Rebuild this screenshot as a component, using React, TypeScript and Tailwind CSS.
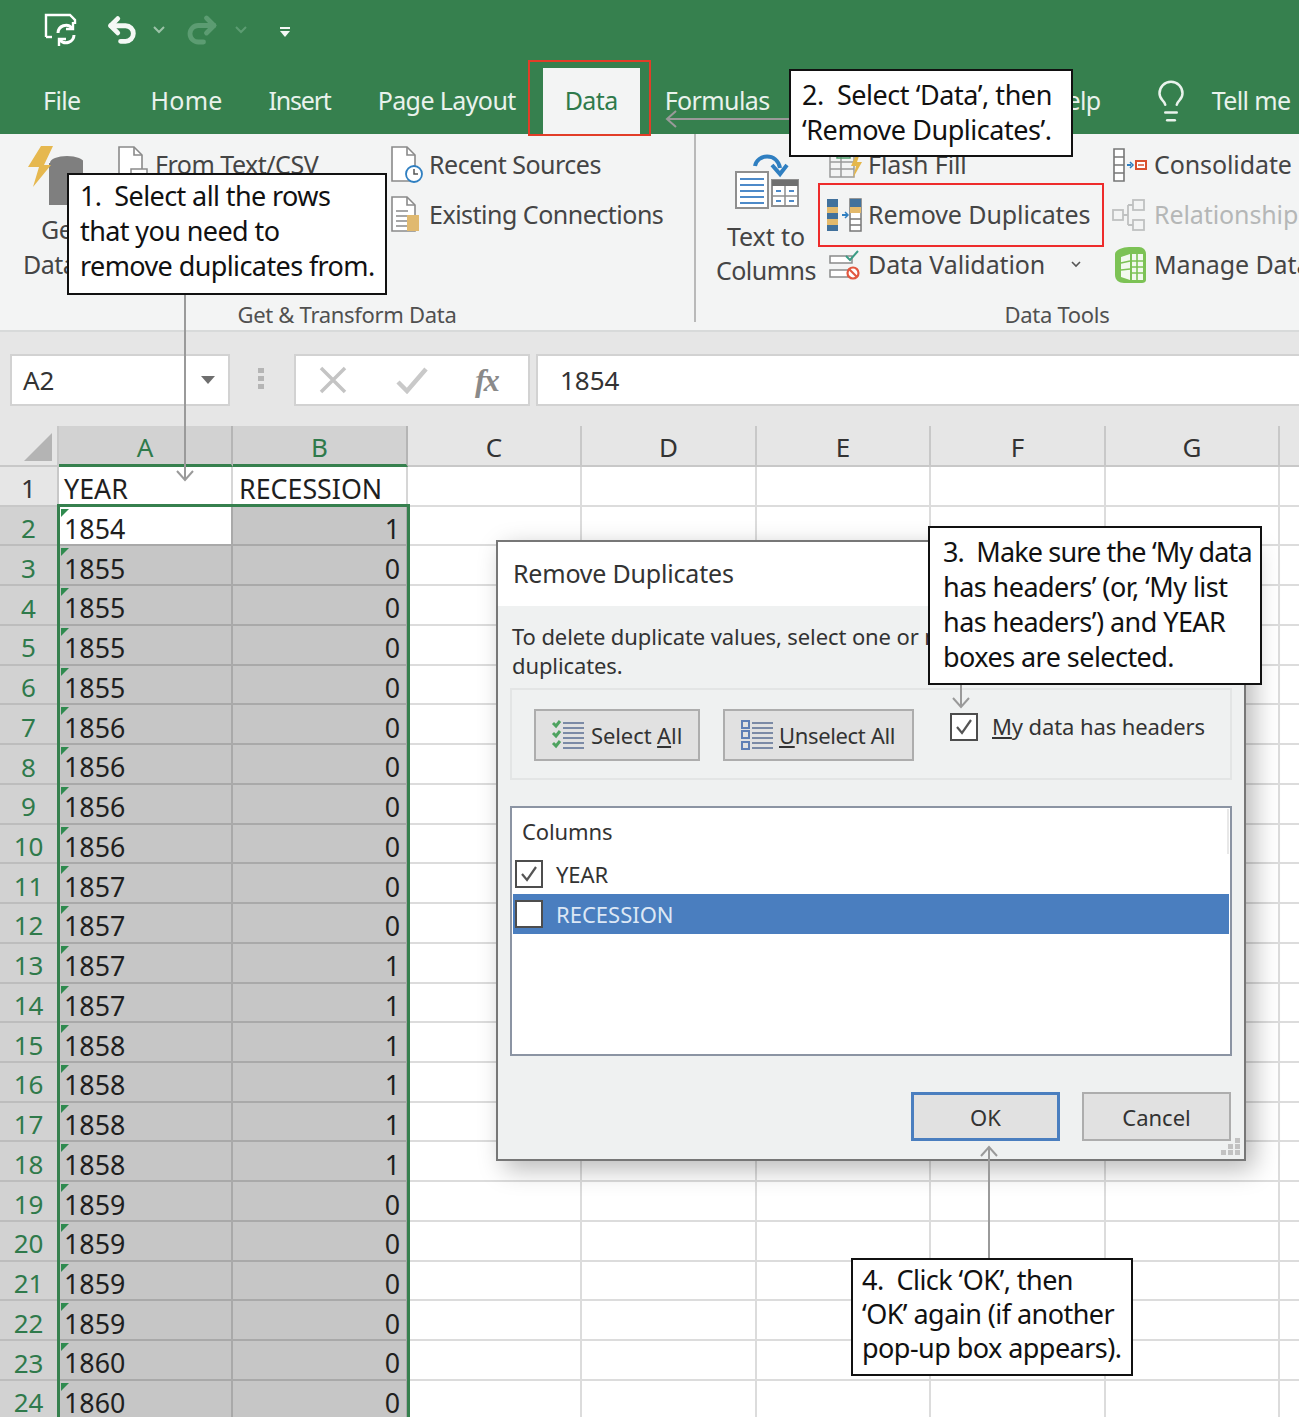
import { Lightbulb, Redo2, Undo2 } from 'lucide-react';
import type { ReactNode } from 'react';

const years = [
  1854, 1855, 1855, 1855, 1855, 1856, 1856, 1856, 1856, 1857, 1857, 1857, 1857, 1858, 1858, 1858,
  1858, 1859, 1859, 1859, 1859, 1860, 1860,
];
const recession = [1, 0, 0, 0, 0, 0, 0, 0, 0, 0, 0, 1, 1, 1, 1, 1, 1, 0, 0, 0, 0, 0, 0];
const columns = ['A', 'B', 'C', 'D', 'E', 'F', 'G'];

const tabText = 'text-[25px] tracking-[-0.6px] text-[#e9f2ec] whitespace-nowrap';
const ribbonText = 'text-[25px] tracking-[-0.5px] text-[#454545] whitespace-nowrap';
const ribbonTextRight = 'text-[25px] tracking-[-0.1px] text-[#454545] whitespace-nowrap';
const groupLabel = 'text-[22px] tracking-[-0.3px] leading-[30px] text-[#505050] whitespace-nowrap';
const sheetText = 'text-[26.8px] text-[#1f1f1f] whitespace-nowrap';
const dialogText = 'text-[22px] tracking-[-0.1px] text-[#333] whitespace-nowrap';

function RibbonRow({ icon, iconWidth, label, muted, right }: { icon: ReactNode; iconWidth: string; label: string; muted?: boolean; right?: boolean }) {
  return (
    <div className="flex h-[50px] items-center">
      <div className={`${iconWidth} flex shrink-0 items-center`}>{icon}</div>
      <span className={muted ? 'text-[25px] tracking-[-0.1px] text-[#b5b7b7] whitespace-nowrap' : right ? ribbonTextRight : ribbonText}>{label}</span>
    </div>
  );
}

function DocIcon({ children }: { children?: ReactNode }) {
  return (
    <svg width="34" height="40" viewBox="0 0 34 40" fill="none">
      <path d="M2 2h15l8 8v26H2z" fill="#fff" stroke="#8a8a8a" strokeWidth="1.6" />
      <path d="M17 2v8h8" stroke="#8a8a8a" strokeWidth="1.6" />
      {children}
    </svg>
  );
}

function SaveSyncIcon() {
  return (
    <svg width="36" height="34" viewBox="0 0 36 34" fill="none">
      <path d="M2 24V2h24l5 5v4" stroke="#fff" strokeWidth="2.4" />
      <path d="M2 24h6" stroke="#fff" strokeWidth="2.4" />
      <path d="M14 20a8 8 0 0 1 14-5M30 22a8 8 0 0 1-14 5" stroke="#fff" strokeWidth="3" />
      <path d="M29 9v7h-7M15 33v-7h7" stroke="#fff" strokeWidth="2.4" />
    </svg>
  );
}

function TextColumnsIcon() {
  return (
    <svg width="64" height="58" viewBox="0 0 64 58" fill="none">
      <path d="M20 14c2-12 22-14 25 2" stroke="#2f7fc1" strokeWidth="4" />
      <path d="M37 13l8 9 7-9" stroke="#2f7fc1" strokeWidth="4" />
      <rect x="1" y="20" width="32" height="36" fill="#fff" stroke="#8f8f8f" strokeWidth="2" />
      <path d="M5 27h24M5 33h24M5 39h24M5 45h24M5 51h24" stroke="#4d8ac9" strokeWidth="2" />
      <rect x="37" y="28" width="26" height="26" fill="#fff" stroke="#8f8f8f" strokeWidth="2" />
      <rect x="37" y="28" width="26" height="6" fill="#6f6f6f" />
      <path d="M50 34v20M37 44h26" stroke="#8f8f8f" strokeWidth="1.5" />
      <path d="M41 39h5M54 39h5M41 49h5M54 49h5" stroke="#4d8ac9" strokeWidth="2" />
    </svg>
  );
}

function RemoveDuplicatesIcon() {
  return (
    <svg width="36" height="34" viewBox="0 0 36 34" fill="none">
      <rect x="1" y="1" width="11" height="32" fill="#41719c" />
      <rect x="1" y="9" width="11" height="6" fill="#e3b96b" />
      <rect x="1" y="21" width="11" height="6" fill="#e3b96b" />
      <path d="M16 17h5" stroke="#2f7fc1" strokeWidth="2" />
      <path d="M19 14l3 3-3 3" stroke="#2f7fc1" strokeWidth="1.5" />
      <rect x="24" y="1" width="11" height="32" fill="#fff" stroke="#777" strokeWidth="1.5" />
      <rect x="24" y="1" width="11" height="8" fill="#41719c" />
      <rect x="24" y="9" width="11" height="6" fill="#e3b96b" />
      <path d="M24 21h11M24 27h11" stroke="#777" strokeWidth="1.5" />
    </svg>
  );
}

function FlashFillIcon() {
  return (
    <svg width="34" height="28" viewBox="0 0 34 28" fill="none">
      <path d="M1 4h24v22H1zM1 11h24M1 18h24M12 4v22" stroke="#9a9a9a" strokeWidth="1.5" />
      <path d="M8 1h13v6H8z" stroke="#4f9d6b" strokeWidth="1.5" />
      <path d="M28 2l-6 13h5l-3 12 9-16h-5l3-9z" fill="#e5b74b" />
    </svg>
  );
}

function DataValidationIcon() {
  return (
    <svg width="32" height="30" viewBox="0 0 32 30" fill="none">
      <path d="M1 6h22v7H1zM1 20h18v7H1z" fill="#fff" stroke="#8a8a8a" strokeWidth="1.5" />
      <path d="M17 6l4 4 8-9" stroke="#3b9c85" strokeWidth="2" />
      <circle cx="24" cy="23" r="5.5" fill="#fff" stroke="#e2573f" strokeWidth="2.2" />
      <path d="M20 19l8 8" stroke="#e2573f" strokeWidth="2.2" />
    </svg>
  );
}

function ConsolidateIcon() {
  return (
    <svg width="36" height="34" viewBox="0 0 36 34" fill="none">
      <path d="M2 1h10v32H2zM2 9h10M2 17h10M2 25h10" stroke="#777" strokeWidth="1.6" fill="#fff" />
      <path d="M15 17h4" stroke="#2f7fc1" strokeWidth="2" />
      <path d="M18 14l3 3-3 3" stroke="#2f7fc1" strokeWidth="1.5" />
      <rect x="24" y="13" width="10" height="8" fill="#fff" stroke="#d9502e" strokeWidth="2" />
      <path d="M26 17h6" stroke="#d9502e" strokeWidth="1.5" />
    </svg>
  );
}

function RelationshipsIcon() {
  return (
    <svg width="34" height="32" viewBox="0 0 34 32" fill="none" stroke="#bfc1c1" strokeWidth="1.8">
      <rect x="1" y="11" width="10" height="10" />
      <rect x="21" y="1" width="11" height="10" />
      <rect x="21" y="21" width="11" height="10" />
      <path d="M11 16h5M16 6v20M16 6h5M16 26h5" />
    </svg>
  );
}

function ManageModelIcon() {
  return (
    <svg width="36" height="38" viewBox="0 0 36 38" fill="none">
      <path d="M3 8c0-4 8-7 14-7h10c4 0 7 3 7 7v26c0 2-2 3-4 3H12c-5 0-9-3-9-8z" fill="#7cc255" />
      <path d="M9 11l9-3v26l-9-3zM20 8h11v26H20z" fill="#fff" opacity="0.9" />
      <path d="M20 15h11M20 21h11M20 27h11M25 8v26M9 17l9-2M9 24l9-1" stroke="#7cc255" strokeWidth="1.6" />
    </svg>
  );
}

function CheckBox({ checked, size }: { checked: boolean; size: string }) {
  return (
    <div className={`${size} flex shrink-0 items-center justify-center border-2 border-[#4d4d4d] bg-white`}>
      {checked && (
        <svg width="20" height="18" viewBox="0 0 20 18" fill="none">
          <path d="M3 9l5 6L17 2" stroke="#555" strokeWidth="2.2" />
        </svg>
      )}
    </div>
  );
}

function Callout({ className, children }: { className: string; children: ReactNode }) {
  return (
    <div className={`absolute z-30 border-2 border-[#111] bg-white text-[27px] text-[#111] whitespace-pre ${className}`}>
      {children}
    </div>
  );
}

export default function App() {
  return (
    <div className="relative h-[1417px] w-[1299px] overflow-hidden bg-white font-['Noto_Sans',sans-serif]">
      {/* title bar and tabs */}
      <div className="h-[134px] bg-[#36804e]">
        <div className="flex h-[68px] items-center pb-[8px] pl-[44px]">
          <SaveSyncIcon />
          <Undo2 className="ml-[25px] text-[#f4f8f5]" size={34} strokeWidth={3.4} />
          <svg className="ml-[14px]" width="12" height="8" viewBox="0 0 12 8" fill="none">
            <path d="M1 1l5 5 5-5" stroke="#9cc3a8" strokeWidth="2" />
          </svg>
          <Redo2 className="ml-[19px] text-[#5c9c72]" size={36} strokeWidth={3.2} />
          <svg className="ml-[15px]" width="12" height="8" viewBox="0 0 12 8" fill="none">
            <path d="M1 1l5 5 5-5" stroke="#5c9c72" strokeWidth="2" />
          </svg>
          <svg className="ml-[32px] mt-[4px]" width="12" height="12" viewBox="0 0 12 12" fill="#f4f8f5">
            <rect x="1" y="1" width="10" height="2" />
            <path d="M1 5h10l-5 6z" />
          </svg>
        </div>
        <div className="flex h-[66px] items-center pl-[43px]">
          <span className={tabText}>File</span>
          <span className="ml-[70px] whitespace-nowrap text-[25px] tracking-[0.2px] text-[#e9f2ec]">Home</span>
          <span className="ml-[46px] whitespace-nowrap text-[25px] tracking-[-1.2px] text-[#e9f2ec]">Insert</span>
          <span className={`${tabText} ml-[47px]`}>Page Layout</span>
          <div className="ml-[27px] flex h-full w-[97px] items-center justify-center bg-[#f3f4f4]">
            <span className="text-[25px] tracking-[-0.6px] text-[#2f7a4b]">Data</span>
          </div>
          <span className={`${tabText} ml-[25px]`}>Formulas</span>
          <span className={`${tabText} ml-[279px]`}>Help</span>
          <Lightbulb className="ml-[47px] text-[#e9f2ec]" size={46} strokeWidth={1.3} />
          <span className={`${tabText} ml-[18px]`}>Tell me</span>
        </div>
      </div>

      {/* ribbon */}
      <div className="flex h-[198px] border-b-2 border-[#d8dada] bg-[#f3f4f4]">
        <div className="flex h-[188px] w-[696px] shrink-0 flex-col border-r-2 border-[#b9b9b9] pt-[6px]">
          <div className="flex h-[150px] shrink-0">
            <div className="ml-[23px] flex w-[94px] shrink-0 flex-col">
              <svg className="ml-[4px] mt-[5px]" width="56" height="62" viewBox="0 0 56 62" fill="none">
                <ellipse cx="40" cy="18" rx="17" ry="7" fill="#7f7f7f" />
                <rect x="22" y="18" width="34" height="42" fill="#7f7f7f" />
                <path d="M14 1h12L17 20h7L6 42l6-20H1z" fill="#e6b84f" />
              </svg>
              <div className={`${ribbonText} ml-[18px] mt-[5px] leading-[35px]`}>Get</div>
              <div className={`${ribbonText} leading-[35px]`}>Data</div>
            </div>
            <div className="flex w-[273px] shrink-0 flex-col">
              <RibbonRow
                iconWidth="w-[38px]"
                label="From Text/CSV"
                icon={
                  <DocIcon>
                    <rect x="14" y="24" width="16" height="14" fill="#fff" stroke="#8a8a8a" strokeWidth="1.5" />
                  </DocIcon>
                }
              />
            </div>
            <div className="flex flex-col">
              <RibbonRow
                iconWidth="w-[39px]"
                label="Recent Sources"
                icon={
                  <DocIcon>
                    <circle cx="24" cy="29" r="8" fill="#fff" stroke="#2f7fc1" strokeWidth="1.8" />
                    <path d="M24 24v5h4" stroke="#555" strokeWidth="1.5" />
                  </DocIcon>
                }
              />
              <RibbonRow
                iconWidth="w-[39px]"
                label="Existing Connections"
                icon={
                  <DocIcon>
                    <path d="M6 16h12M6 21h12M6 26h12M6 31h12" stroke="#8a8a8a" strokeWidth="1.5" />
                    <rect x="17" y="20" width="12" height="16" fill="#e0b96f" />
                  </DocIcon>
                }
              />
            </div>
          </div>
          <div className={`${groupLabel} shrink-0 pt-[9px] text-center`}>Get &amp; Transform Data</div>
        </div>
        <div className="flex h-[188px] w-[722px] shrink-0 flex-col pt-[6px]">
          <div className="flex h-[150px] shrink-0">
            <div className="ml-[19px] flex w-[102px] shrink-0 flex-col items-center">
              <div className="mt-[12px] ml-[1px]"><TextColumnsIcon /></div>
              <div className={`${ribbonTextRight} mt-[9px] leading-[34px]`}>Text to</div>
              <div className={`${ribbonText} leading-[34px]`}>Columns</div>
            </div>
            <div className="ml-[12px] flex w-[283px] shrink-0 flex-col">
              <RibbonRow right iconWidth="w-[39px]" label="Flash Fill" icon={<FlashFillIcon />} />
              <div className="-ml-[3px]">
                <RibbonRow right iconWidth="w-[42px]" label="Remove Duplicates" icon={<RemoveDuplicatesIcon />} />
              </div>
              <div className="flex h-[50px] items-center">
                <RibbonRow right iconWidth="w-[39px]" label="Data Validation" icon={<DataValidationIcon />} />
                <svg className="ml-[25px]" width="12" height="8" viewBox="0 0 12 8" fill="none">
                  <path d="M2 1l4 4 4-4" stroke="#555" strokeWidth="1.6" />
                </svg>
              </div>
            </div>
            <div className="flex flex-col">
              <RibbonRow right iconWidth="w-[42px]" label="Consolidate" icon={<ConsolidateIcon />} />
              <RibbonRow right iconWidth="w-[42px]" label="Relationships" muted icon={<RelationshipsIcon />} />
              <RibbonRow right iconWidth="w-[42px]" label="Manage Data Model" icon={<ManageModelIcon />} />
            </div>
          </div>
          <div className={`${groupLabel} shrink-0 pt-[9px] text-center`}>Data Tools</div>
        </div>
      </div>

      {/* formula bar */}
      <div className="flex h-[94px] items-start bg-[#e6e6e6] pl-[10px] pt-[22px]">
        <div className="flex h-[52px] w-[220px] shrink-0 items-center justify-between border-2 border-[#d2d2d2] bg-white pl-[11px] pr-[13px]">
          <span className="text-[26px] text-[#333]">A2</span>
          <svg width="14" height="8" viewBox="0 0 14 8" fill="#6e6e6e">
            <path d="M0 0h14L7 8z" />
          </svg>
        </div>
        <div className="ml-[28px] mt-[14px] flex w-[8px] shrink-0 flex-col gap-[3px]">
          <div className="h-[5px] w-[6px] bg-[#b5b5b5]" />
          <div className="h-[5px] w-[6px] bg-[#b5b5b5]" />
          <div className="h-[5px] w-[6px] bg-[#b5b5b5]" />
        </div>
        <div className="ml-[28px] flex h-[52px] w-[236px] shrink-0 items-center border-2 border-[#d2d2d2] bg-white pl-[22px]">
          <svg width="30" height="28" viewBox="0 0 30 28" fill="none">
            <path d="M3 2l24 24M27 2L3 26" stroke="#c4c4c4" strokeWidth="3.5" />
          </svg>
          <svg className="ml-[48px]" width="32" height="28" viewBox="0 0 32 28" fill="none">
            <path d="M2 16l9 9L30 3" stroke="#c9c9c9" strokeWidth="4.5" />
          </svg>
          <span className="ml-[47px] font-['Liberation_Serif',serif] text-[32px] font-bold italic leading-none tracking-[-2px] text-[#8a8a8a]">fx</span>
        </div>
        <div className="ml-[6px] flex h-[52px] flex-1 items-center border-2 border-r-0 border-[#d2d2d2] bg-white pl-[22px]">
          <span className="text-[26px] text-[#333]">1854</span>
        </div>
      </div>

      {/* sheet */}
      <div className="grid grid-cols-[59px_174px_175px_174px_175px_174px_175px_174px_19px] grid-rows-[41px] auto-rows-[39.74px]">
        <div className="relative border-r-2 border-b-2 border-[#c8c8c8] bg-[#e6e6e6]">
          <div className="absolute bottom-[4px] right-[5px] h-0 w-0 border-b-[28px] border-l-[28px] border-b-[#b4b4b4] border-l-transparent" />
        </div>
        {columns.map((col, i) => (
          <div
            key={col}
            className={
              i < 2
                ? 'flex items-center justify-center border-r-2 border-b-[3px] border-r-[#b5b5b5] border-b-[#36804e] bg-[#d2d2d2] pt-[4px] text-[26px] text-[#2f7a4b]'
                : 'flex items-center justify-center border-r-2 border-b-2 border-[#c8c8c8] bg-[#e6e6e6] pt-[4px] text-[26px] text-[#333]'
            }
          >
            {col}
          </div>
        ))}
        <div className="border-b-2 border-[#c8c8c8] bg-[#e6e6e6]" />

        <div className="flex items-center justify-center border-r-2 border-b-2 border-[#c8c8c8] bg-[#e6e6e6] pt-[6px] text-[26px] text-[#333]">1</div>
        <div className={`${sheetText} flex items-center border-r-2 border-b-2 border-[#d6d6d6] pl-[5px] pt-[7px]`}>YEAR</div>
        <div className={`${sheetText} flex items-center border-r-2 border-b-2 border-[#d6d6d6] pl-[6px] pt-[7px]`}>RECESSION</div>
        {columns.slice(2).map((col) => (
          <div key={col} className="border-r-2 border-b-2 border-[#dcdcdc]" />
        ))}
        <div className="border-b-2 border-[#dcdcdc]" />

        {years.map((year, i) => (
          <div key={i} className="contents">
            <div className="flex items-center justify-center border-r-2 border-b-2 border-[#bdbdbd] bg-[#d2d2d2] pt-[6px] text-[26px] text-[#2f7a4b]">{i + 2}</div>
            <div className={`${sheetText} relative flex items-center border-r-2 border-b-2 border-[#a9a9a9] pl-[5px] pt-[7px] ${i === 0 ? 'bg-white' : 'bg-[#c6c6c6]'}`}>
              <div className="absolute left-[2px] top-[2px] h-0 w-0 border-t-[8px] border-r-[8px] border-t-[#2f8a4f] border-r-transparent" />
              {year}
            </div>
            <div className={`${sheetText} flex items-center justify-end border-r-2 border-b-2 border-[#a9a9a9] bg-[#c6c6c6] pr-[6px] pt-[7px]`}>{recession[i]}</div>
            {columns.slice(2).map((col) => (
              <div key={col} className="border-r-2 border-b-2 border-[#dcdcdc]" />
            ))}
            <div className="border-b-2 border-[#dcdcdc]" />
          </div>
        ))}
      </div>

      {/* green selection frame, runs past the bottom of the picture */}
      <div className="absolute left-[57px] top-[504px] h-[930px] w-[353px] border-[3px] border-[#36804e]" />

      {/* dialog */}
      <div className="absolute left-[496px] top-[540px] z-10 flex h-[621px] w-[750px] flex-col border-2 border-[#777] bg-[#eff1f1] shadow-[8px_8px_24px_rgba(0,0,0,0.28)]">
        <div className="flex h-[64px] shrink-0 items-center bg-white pl-[15px]">
          <span className="text-[25px] tracking-[-0.2px] text-[#333]">Remove Duplicates</span>
        </div>
        <div className="flex flex-1 flex-col pl-[12px] pr-[12px]">
          <div className={`${dialogText} ml-[2px] mt-[16px] leading-[29px]`}>
            <div>To delete duplicate values, select one or more columns that contain</div>
            <div>duplicates.</div>
          </div>
          <div className="mt-[8px] flex h-[92px] items-start border-2 border-[#e3e5e5] pl-[22px] pt-[19px]">
            <div className="flex h-[52px] w-[166px] items-center border-2 border-[#adadad] bg-[#e1e1e1] pl-[15px]">
              <svg width="34" height="32" viewBox="0 0 34 32" fill="none">
                <path d="M2 4l3 3 4-5M2 14l3 3 4-5M2 24l3 3 4-5" stroke="#4ea35f" strokeWidth="3" />
                <path d="M12 4h21M12 9h21M12 14h21M12 19h21M12 24h21M12 29h21" stroke="#7b8aa6" strokeWidth="2.2" />
              </svg>
              <span className={`${dialogText} ml-[6px]`}>Select <span className="underline">A</span>ll</span>
            </div>
            <div className="ml-[23px] flex h-[52px] w-[191px] items-center border-2 border-[#adadad] bg-[#e1e1e1] pl-[15px]">
              <svg width="34" height="32" viewBox="0 0 34 32" fill="none">
                <path d="M2 2h7v7H2zM2 12h7v7H2zM2 23h7v7H2z" stroke="#5f7fb5" strokeWidth="2" />
                <path d="M12 4h21M12 9h21M12 14h21M12 19h21M12 24h21M12 29h21" stroke="#7b8aa6" strokeWidth="2.2" />
              </svg>
              <span className="ml-[5px] whitespace-nowrap text-[22px] tracking-[-0.35px] text-[#333]"><span className="underline">U</span>nselect All</span>
            </div>
            <div className="ml-[36px] mt-[1px] flex items-center">
              <CheckBox checked size="h-[28px] w-[28px]" />
              <span className={`${dialogText} ml-[14px]`}><span className="underline">M</span>y data has headers</span>
            </div>
          </div>
          <div className="relative mt-[26px] h-[250px] border-2 border-[#8b94a3] bg-white">
            <div className={`${dialogText} flex h-[46px] items-center pl-[10px]`}>Columns</div>
            <div className="flex h-[40px] items-center pl-[3px]">
              <CheckBox checked size="h-[28px] w-[28px]" />
              <span className={`${dialogText} ml-[13px]`}>YEAR</span>
            </div>
            <div className="ml-[1px] mr-[1px] flex h-[40px] items-center bg-[#4a7ebf] pl-[2px]">
              <CheckBox checked={false} size="h-[28px] w-[28px]" />
              <span className="ml-[13px] text-[22px] text-[#dce7f5]">RECESSION</span>
            </div>
            <div className="absolute right-[1px] top-[1px] h-[45px] w-[2px] bg-[#e8e8e8]" />
          </div>
          <div className="mt-[36px] flex items-center justify-end pr-[1px]">
            <div className="flex h-[49px] w-[149px] items-center justify-center border-[3px] border-[#4a7ebf] bg-[#e1e1e1] pt-[1px] text-[22px] text-[#333]">OK</div>
            <div className="ml-[22px] flex h-[49px] w-[149px] items-center justify-center border-2 border-[#adadad] bg-[#e1e1e1] pt-[1px] text-[22px] text-[#333]">Cancel</div>
          </div>
        </div>
        <svg className="absolute bottom-[3px] right-[3px]" width="20" height="18" viewBox="0 0 20 18" fill="#c2c2c2">
          <rect x="14" y="0" width="5" height="5" />
          <rect x="7" y="6" width="5" height="5" />
          <rect x="14" y="6" width="5" height="5" />
          <rect x="0" y="12" width="5" height="5" />
          <rect x="7" y="12" width="5" height="5" />
          <rect x="14" y="12" width="5" height="5" />
        </svg>
      </div>

      {/* red highlight boxes */}
      <div className="absolute left-[528px] top-[60px] z-20 h-[76px] w-[123px] border-2 border-[#e23d28]" />
      <div className="absolute left-[818px] top-[183px] z-20 h-[64px] w-[286px] border-2 border-[#ee2b2b]" />

      {/* arrows from the callouts */}
      <svg className="pointer-events-none absolute left-0 top-0 z-20" width="1299" height="1417" viewBox="0 0 1299 1417" fill="none" stroke="#9a9a9a" strokeWidth="2">
        <path d="M185 295v185M177 471l8 9 8-9" />
        <path d="M789 119H667M676 111l-9 8 9 8" />
        <path d="M961 685v22M953 698l8 9 8-9" />
        <path d="M989 1258v-111M981 1156l8-9 8 9" />
      </svg>

      {/* callouts */}
      <Callout className="left-[67px] top-[173px] h-[122px] w-[320px] pl-[11px] pt-[3px] leading-[35px] tracking-[-0.6px]">
        {'1.  Select all the rows\nthat you need to\nremove duplicates from.'}
      </Callout>
      <Callout className="left-[789px] top-[69px] h-[88px] w-[284px] pl-[11px] pt-[6px] leading-[35px] tracking-[-0.45px]">
        {'2.  Select \u2018Data\u2019, then\n\u2018Remove Duplicates\u2019.'}
      </Callout>
      <Callout className="left-[928px] top-[526px] h-[159px] w-[334px] pl-[13px] pt-[6px] leading-[35px] tracking-[-0.55px]">
        <span className="tracking-[-0.85px]">{'3.  Make sure the \u2018My data'}</span>
        {'\nhas headers\u2019 (or, \u2018My list\nhas headers\u2019) and YEAR\nboxes are selected.'}
      </Callout>
      <Callout className="left-[851px] top-[1258px] h-[118px] w-[282px] pl-[9px] pt-[3px] leading-[34px] tracking-[-0.55px]">
        {'4.  Click \u2018OK\u2019, then\n\u2018OK\u2019 again (if another\npop-up box appears).'}
      </Callout>
    </div>
  );
}
